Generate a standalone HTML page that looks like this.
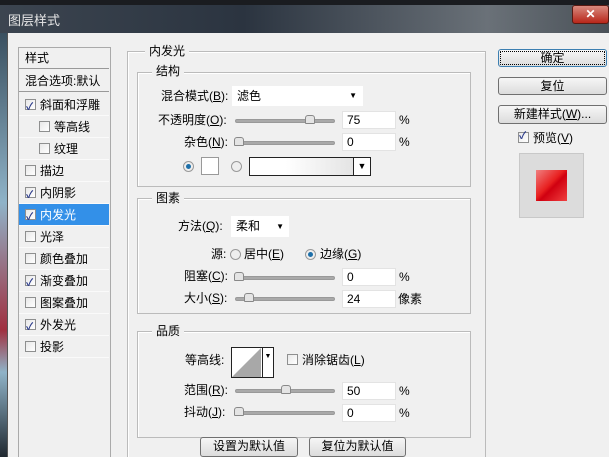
<!DOCTYPE html><html style="width:609px;height:457px;overflow:hidden"><head><meta charset="utf-8"><style>
*{margin:0;padding:0;box-sizing:border-box}
body{width:609px;height:457px;overflow:hidden;position:relative;background:#f0f0f0;font:12px "Liberation Sans","Noto Sans CJK SC",sans-serif;color:#000}
.a{position:absolute;white-space:nowrap}
.lbl{position:absolute;white-space:nowrap;line-height:14px}
.gb{position:absolute;border:1px solid #bbb;box-shadow:inset 1px 1px 0 #fff}
.gt{position:absolute;background:#f0f0f0;padding:0 4px;line-height:14px}
.cb{display:inline-block;width:11px;height:11px;border:1px solid #8e8f8f;background:linear-gradient(135deg,#e8e8e8,#fff);vertical-align:-1px;margin-right:4px;position:relative}
.cb.c::after{content:"✓";position:absolute;left:0;top:-3px;font-size:10px;color:#2a3a8a;font-weight:bold}
.row{position:absolute;left:19px;width:90px;height:22px;line-height:22px;border-bottom:1px solid #fafafa;padding-left:6px}
.inp{position:absolute;background:#fff;border:1px solid #e3e3e3;height:18px;line-height:16px;padding-left:4px;width:54px}
.sl{position:absolute;height:4px;background:#a9a9a9;border-radius:2px;border:1px solid #999;width:100px}
.th{position:absolute;top:-5px;width:10px;height:9px;border:1px solid #888;border-radius:3px 3px 1px 1px;background:#e4e4e4}
.rad{position:absolute;width:11px;height:11px;border-radius:50%;border:1px solid #999;background:#eee}
.rad.on::after{content:"";position:absolute;left:2px;top:2px;width:5px;height:5px;border-radius:50%;background:#1d6fa9}
.btn{position:absolute;border:1px solid #707070;border-radius:3px;background:linear-gradient(#f6f6f6,#dcdcdc);text-align:center;line-height:16px}
</style></head><body>
<div class="a" style="left:0;top:0;width:609px;height:33px;background:linear-gradient(90deg,#3c4550,#2b3440 40%,#6a7178 80%,#4a5158)"></div>
<div class="a" style="left:0;top:0;width:609px;height:5px;background:#1a1c20"></div>
<div class="a" style="left:572px;top:5px;width:37px;height:19px;background:linear-gradient(#d98a7e,#b8261a);border:1px solid #5a1a12;border-radius:3px;color:#fff;text-align:center;font-weight:bold;line-height:17px">✕</div>
<div class="a" style="left:8px;top:10px;color:#e6e6e6;font-size:13px">图层样式</div>
<div class="a" style="left:0;top:33px;width:7px;height:424px;background:linear-gradient(#3a5060,#8fb3c8 40%,#a03040 70%,#8fb3c8 80%,#202830)"></div>
<div class="a" style="left:7px;top:33px;width:1px;height:424px;background:#555"></div>

<div class="a" style="left:18px;top:47px;width:93px;height:420px;border:1px solid #aaa;background:#f0f0f0"></div>
<div class="row" style="top:48px;height:21px;line-height:20px;border-bottom:1px solid #999">样式</div>
<div class="row" style="top:70px;border-bottom:1px solid #999">混合选项:默认</div>
<div class="row" style="top:94px"><span class="cb c"></span>斜面和浮雕</div>
<div class="row" style="top:116px;padding-left:20px"><span class="cb"></span>等高线</div>
<div class="row" style="top:138px;padding-left:20px"><span class="cb"></span>纹理</div>
<div class="row" style="top:160px"><span class="cb"></span>描边</div>
<div class="row" style="top:182px"><span class="cb c"></span>内阴影</div>
<div class="row" style="top:204px;background:#3390e8;color:#fff"><span class="cb c"></span>内发光</div>
<div class="row" style="top:226px"><span class="cb"></span>光泽</div>
<div class="row" style="top:248px"><span class="cb"></span>颜色叠加</div>
<div class="row" style="top:270px"><span class="cb c"></span>渐变叠加</div>
<div class="row" style="top:292px"><span class="cb"></span>图案叠加</div>
<div class="row" style="top:314px"><span class="cb c"></span>外发光</div>
<div class="row" style="top:336px"><span class="cb"></span>投影</div>

<div class="gb" style="left:127px;top:51px;width:359px;height:420px"></div>
<div class="gt" style="left:145px;top:44px">内发光</div>

<div class="gb" style="left:137px;top:72px;width:334px;height:115px"></div>
<div class="gt" style="left:152px;top:64px">结构</div>
<div class="lbl" style="left:161px;top:89px">混合模式(<u>B</u>):</div>
<div class="a" style="left:232px;top:86px;width:131px;height:20px;background:#fff;line-height:20px;padding-left:5px">滤色<span style="position:absolute;right:6px;font-size:8px">▼</span></div>
<div class="lbl" style="left:158px;top:113px">不透明度(<u>O</u>):</div>
<div class="sl" style="left:235px;top:119px"><div class="th" style="left:69px"></div></div>
<div class="inp" style="left:342px;top:111px">75</div><div class="lbl" style="left:399px;top:113px">%</div>
<div class="lbl" style="left:184px;top:135px">杂色(<u>N</u>):</div>
<div class="sl" style="left:235px;top:141px"><div class="th" style="left:-2px"></div></div>
<div class="inp" style="left:342px;top:133px">0</div><div class="lbl" style="left:399px;top:135px">%</div>
<div class="rad on" style="left:183px;top:161px"></div>
<div class="a" style="left:201px;top:157px;width:18px;height:18px;background:#fff;border:1px solid #999"></div>
<div class="rad" style="left:231px;top:161px"></div>
<div class="a" style="left:249px;top:157px;width:122px;height:19px;border:1px solid #222;background:linear-gradient(90deg,#fff 30%,#ddd);"><span style="position:absolute;right:0;top:0;width:17px;height:17px;border-left:1px solid #222;background:#fff;font-size:9px;text-align:center;line-height:17px">▼</span></div>

<div class="gb" style="left:137px;top:198px;width:334px;height:116px"></div>
<div class="gt" style="left:152px;top:191px">图素</div>
<div class="lbl" style="left:178px;top:219px">方法(<u>Q</u>):</div>
<div class="a" style="left:231px;top:216px;width:58px;height:21px;background:#fff;line-height:21px;padding-left:5px">柔和<span style="position:absolute;right:5px;font-size:8px">▼</span></div>
<div class="lbl" style="left:211px;top:247px">源:</div>
<div class="rad" style="left:230px;top:249px"></div><div class="lbl" style="left:244px;top:247px">居中(<u>E</u>)</div>
<div class="rad on" style="left:305px;top:249px"></div><div class="lbl" style="left:320px;top:247px">边缘(<u>G</u>)</div>
<div class="lbl" style="left:184px;top:269px">阻塞(<u>C</u>):</div>
<div class="sl" style="left:235px;top:276px"><div class="th" style="left:-2px"></div></div>
<div class="inp" style="left:342px;top:268px">0</div><div class="lbl" style="left:399px;top:270px">%</div>
<div class="lbl" style="left:184px;top:291px">大小(<u>S</u>):</div>
<div class="sl" style="left:235px;top:297px"><div class="th" style="left:8px"></div></div>
<div class="inp" style="left:342px;top:290px">24</div><div class="lbl" style="left:398px;top:292px">像素</div>

<div class="gb" style="left:137px;top:331px;width:334px;height:107px"></div>
<div class="gt" style="left:152px;top:324px">品质</div>
<div class="lbl" style="left:185px;top:353px">等高线:</div>
<div class="a" style="left:231px;top:347px;width:43px;height:31px;border:1px solid #222;background:#fff;overflow:hidden"><svg width="30" height="29" style="position:absolute;left:0;top:0"><polygon points="0,29 29,0 29,29" fill="#a8a8a8"/></svg><span style="position:absolute;left:30px;top:0;width:11px;height:29px;border-left:1px solid #222;font-size:7px;text-align:center;line-height:18px">▼</span></div>
<div class="lbl" style="left:287px;top:353px"><span class="cb"></span>消除锯齿(<u>L</u>)</div>
<div class="lbl" style="left:184px;top:383px">范围(<u>R</u>):</div>
<div class="sl" style="left:235px;top:389px"><div class="th" style="left:45px"></div></div>
<div class="inp" style="left:342px;top:382px">50</div><div class="lbl" style="left:399px;top:384px">%</div>
<div class="lbl" style="left:184px;top:405px">抖动(<u>J</u>):</div>
<div class="sl" style="left:235px;top:411px"><div class="th" style="left:-2px"></div></div>
<div class="inp" style="left:342px;top:404px">0</div><div class="lbl" style="left:399px;top:406px">%</div>

<div class="btn" style="left:200px;top:437px;width:98px;height:20px">设置为默认值</div>
<div class="btn" style="left:309px;top:437px;width:97px;height:20px">复位为默认值</div>

<div class="btn" style="left:498px;top:49px;width:109px;height:18px;border-color:#3c7fb1;outline:1px dotted #000;outline-offset:-3px">确定</div>
<div class="btn" style="left:498px;top:77px;width:109px;height:18px">复位</div>
<div class="btn" style="left:498px;top:105px;width:109px;height:19px">新建样式(<u>W</u>)...</div>
<div class="lbl" style="left:518px;top:131px"><span class="cb c"></span>预览(<u>V</u>)</div>
<div class="a" style="left:519px;top:153px;width:65px;height:65px;background:#dcdcdc;border:1px solid #c8c8c8"></div>
<div class="a" style="left:536px;top:170px;width:31px;height:31px;background:linear-gradient(135deg,#f08080,#e82020 45%,#d00010 55%,#f04040)"></div>
</body></html>
